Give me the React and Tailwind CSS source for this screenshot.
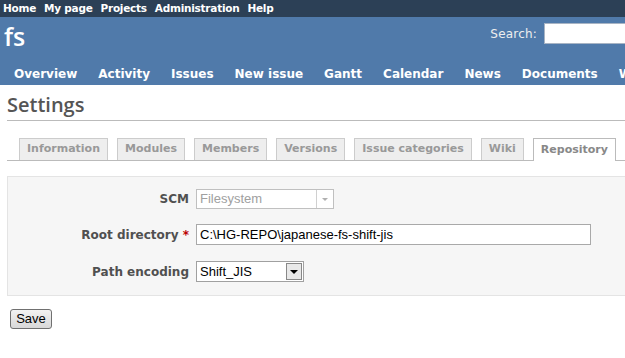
const topMenu = ['Home', 'My page', 'Projects', 'Administration', 'Help'];
const mainMenu = ['Overview', 'Activity', 'Issues', 'New issue', 'Gantt', 'Calendar', 'News', 'Documents', 'Wiki'];
const tabs = ['Information', 'Modules', 'Members', 'Versions', 'Issue categories', 'Wiki', 'Repository'];

const verdana = "font-['Verdana','DejaVu_Sans',sans-serif]";
const arial = "font-['Arial','Liberation_Sans',sans-serif]";

const App = () => {
  return (
    <div className={`w-[625px] h-[358px] overflow-hidden bg-white ${verdana}`}>
      <div className="h-[17px] bg-[#2c4056] flex items-center pl-[3px] gap-[8px] text-[10.5px] tracking-[-0.25px] font-bold text-white whitespace-nowrap">
        {topMenu.map(item => <span key={item}>{item}</span>)}
      </div>

      <div className="bg-[#507aaa] text-white">
        <div className="h-[45px] flex items-start justify-between">
          <h1 className="pl-[4px] pt-[4px] text-[25px] leading-[30px] font-semibold font-['Trebuchet_MS','Open_Sans',sans-serif]">fs</h1>
          <div className="flex items-center gap-[7px] pt-[6px] mr-[-40px] whitespace-nowrap">
            <span className="text-[12px] tracking-[0.2px] text-[#eeeeee]">Search:</span>
            <div className="w-[121px] h-[21px] bg-white border border-[#a8b4c4]" />
          </div>
        </div>
        <div className="h-[23px] flex items-center pl-[14px] gap-[21px] text-[12px] font-bold whitespace-nowrap overflow-hidden">
          {mainMenu.map(item => <span key={item}>{item}</span>)}
        </div>
      </div>

      <div className="pl-[7px]">
        <h2 className="h-[36px] pt-[7px] border-b border-[#bbbbbb] text-[20px] leading-[26px] text-[#555555] font-semibold font-['Trebuchet_MS','Open_Sans',sans-serif]">Settings</h2>

        <div className="mt-[17px] flex items-end gap-[9px] pl-[12px] border-b border-[#bbbbbb] h-[23px]">
          {tabs.map(tab => {
            const active = tab === 'Repository';
            return (
              <div
                key={tab}
                className={`h-[22px] px-[7px] flex items-center text-[11px] font-bold whitespace-nowrap border border-b-0 ${active ? 'bg-white border-[#bbbbbb] text-[#888888] h-[23px] -mb-px' : 'bg-[#eeeeee] border-[#cccccc] text-[#999999]'}`}
              >
                {tab}
              </div>
            );
          })}
        </div>

        <div className="mt-[15px] h-[120px] bg-[#f6f6f6] border border-[#e4e4e4] border-r-0 pt-[12px]">
          <div className="flex items-center h-[20px]">
            <div className="w-[181px] text-right text-[12px] font-bold text-[#505050]">SCM</div>
            <div className={`ml-[7px] w-[138px] h-[20px] flex border border-[#c0c0c0] bg-white ${arial}`}>
              <span className="flex-1 pl-[3px] text-[13px] leading-[18px] text-[#a0a0a0]">Filesystem</span>
              <span className="w-[17px] border-l border-[#d0d0d0] flex items-center justify-center">
                <span className="w-0 h-0 border-l-[3px] border-r-[3px] border-t-[3px] border-l-transparent border-r-transparent border-t-[#b0b0b0]" />
              </span>
            </div>
          </div>

          <div className="flex items-center h-[21px] mt-[15px]">
            <div className="w-[181px] text-right text-[12px] font-bold text-[#505050]">
              Root directory <span className="text-[#bb0000]">*</span>
            </div>
            <div className={`ml-[7px] w-[395px] h-[21px] border border-[#a9a9a9] bg-white pl-[3px] text-[13px] leading-[19px] text-black ${arial}`}>
              C:\HG-REPO\japanese-fs-shift-jis
            </div>
          </div>

          <div className="flex items-center h-[21px] mt-[16px]">
            <div className="w-[181px] text-right text-[12px] font-bold text-[#505050]">Path encoding</div>
            <div className={`ml-[7px] w-[108px] h-[21px] flex border border-[#a0a0a0] bg-white ${arial}`}>
              <span className="flex-1 pl-[3px] text-[13px] leading-[19px] text-black">Shift_JIS</span>
              <span className="w-[16px] my-px mr-px border border-[#888888] bg-[#e8e8e8] flex items-center justify-center">
                <span className="w-0 h-0 border-l-[4px] border-r-[4px] border-t-[4px] border-l-transparent border-r-transparent border-t-black" />
              </span>
            </div>
          </div>
        </div>

        <button className={`mt-[13px] ml-[3px] w-[42px] h-[20px] rounded-[3px] border border-[#707070] bg-gradient-to-b from-[#f2f2f2] to-[#d8d8d8] text-[13px] leading-[18px] text-black ${arial}`}>
          Save
        </button>
      </div>
    </div>
  );
};

export default App;
